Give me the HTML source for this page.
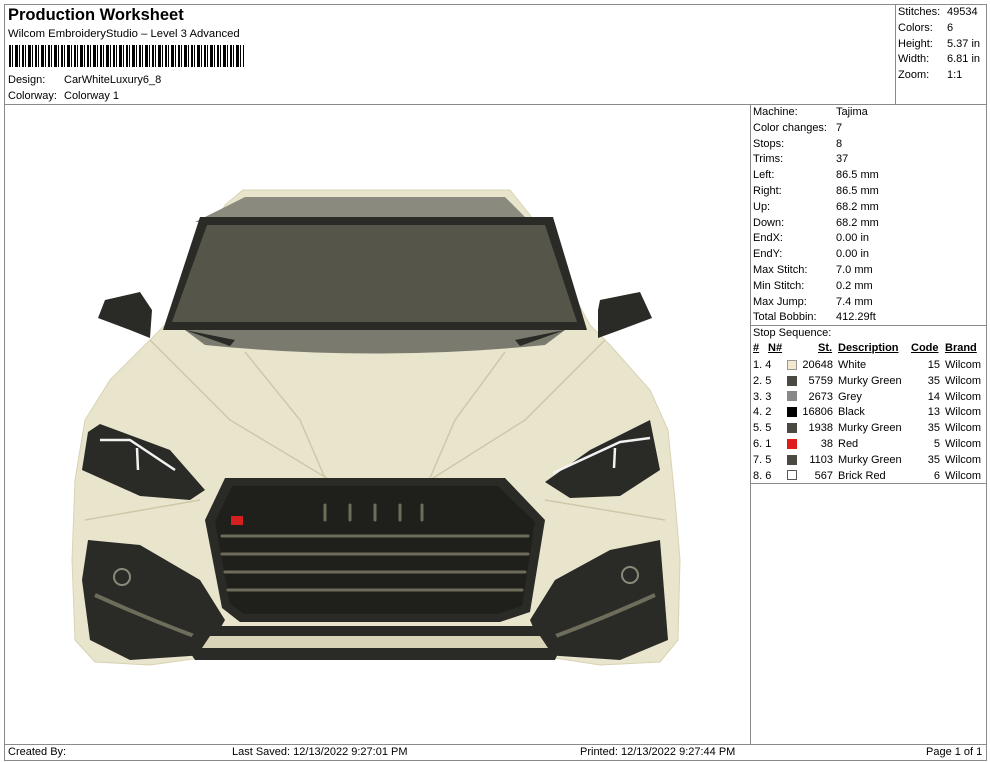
<!DOCTYPE html>
<html><head><meta charset="utf-8"><style>
*{margin:0;padding:0;box-sizing:border-box}
body{width:990px;height:762px;background:#fff;font-family:"Liberation Sans",Arial,sans-serif;color:#000;position:relative;overflow:hidden}
.a{position:absolute;white-space:nowrap}
.l{position:absolute;background:#8a8a8a}
.t{font-size:11px}
</style></head><body>
<div class="l" style="left:4px;top:4px;width:983px;height:1px"></div>
<div class="l" style="left:4px;top:4px;width:1px;height:757px"></div>
<div class="l" style="left:986px;top:4px;width:1px;height:757px"></div>
<div class="l" style="left:4px;top:104px;width:983px;height:1px"></div>
<div class="l" style="left:895px;top:4px;width:1px;height:100px"></div>
<div class="l" style="left:750px;top:104px;width:1px;height:640px"></div>
<div class="l" style="left:750px;top:325px;width:237px;height:1px"></div>
<div class="l" style="left:750px;top:483px;width:237px;height:1px"></div>
<div class="l" style="left:4px;top:744px;width:983px;height:1px"></div>
<div class="l" style="left:4px;top:760px;width:983px;height:1px"></div>

<div class="a" style="left:8px;top:6px;font-size:16.5px;font-weight:bold">Production Worksheet</div>
<div class="a" style="left:8px;top:28px;font-size:11.3px">Wilcom EmbroideryStudio – Level 3 Advanced</div>
<div class="a" style="left:9px;top:45px;width:235px;height:22px;background:repeating-linear-gradient(90deg,#000 0 2px,#fff 2px 3px,#000 3px 4px,#fff 4px 6px,#000 6px 9px,#fff 9px 10px,#000 10px 11px,#fff 11px 13px)"></div>
<div class="a t" style="left:8px;top:74px">Design:</div><div class="a t" style="left:64px;top:74px">CarWhiteLuxury6_8</div>
<div class="a t" style="left:8px;top:90px">Colorway:</div><div class="a t" style="left:64px;top:90px">Colorway 1</div>

<div class="a t" style="left:898px;top:5px;line-height:15.8px">Stitches:<br>Colors:<br>Height:<br>Width:<br>Zoom:</div>
<div class="a t" style="left:947px;top:5px;line-height:15.8px">49534<br>6<br>5.37 in<br>6.81 in<br>1:1</div>

<div class="a t" style="left:753px;top:105px;line-height:15.8px">Machine:<br>Color changes:<br>Stops:<br>Trims:<br>Left:<br>Right:<br>Up:<br>Down:<br>EndX:<br>EndY:<br>Max Stitch:<br>Min Stitch:<br>Max Jump:<br>Total Bobbin:<br>Stop Sequence:</div>
<div class="a t" style="left:836px;top:105px;line-height:15.8px">Tajima<br>7<br>8<br>37<br>86.5 mm<br>86.5 mm<br>68.2 mm<br>68.2 mm<br>0.00 in<br>0.00 in<br>7.0 mm<br>0.2 mm<br>7.4 mm<br>412.29ft</div>

<div class="a t" style="left:753px;top:342px;font-weight:bold;text-decoration:underline">#</div>
<div class="a t" style="left:768px;top:342px;font-weight:bold;text-decoration:underline">N#</div>
<div class="a t" style="left:818px;top:342px;font-weight:bold;text-decoration:underline">St.</div>
<div class="a t" style="left:838px;top:342px;font-weight:bold;text-decoration:underline">Description</div>
<div class="a t" style="left:911px;top:342px;font-weight:bold;text-decoration:underline">Code</div>
<div class="a t" style="left:945px;top:342px;font-weight:bold;text-decoration:underline">Brand</div>
<div class="a t" style="left:753px;top:358px;line-height:15.8px">1. 4<br>2. 5<br>3. 3<br>4. 2<br>5. 5<br>6. 1<br>7. 5<br>8. 6</div>
<div class="a t" style="left:796px;top:358px;line-height:15.8px;text-align:right;width:37px">20648<br>5759<br>2673<br>16806<br>1938<br>38<br>1103<br>567</div>
<div class="a t" style="left:838px;top:358px;line-height:15.8px">White<br>Murky Green<br>Grey<br>Black<br>Murky Green<br>Red<br>Murky Green<br>Brick Red</div>
<div class="a t" style="left:920px;top:358px;line-height:15.8px;text-align:right;width:20px">15<br>35<br>14<br>13<br>35<br>5<br>35<br>6</div>
<div class="a t" style="left:945px;top:358px;line-height:15.8px">Wilcom<br>Wilcom<br>Wilcom<br>Wilcom<br>Wilcom<br>Wilcom<br>Wilcom<br>Wilcom</div>
<div class="a" style="left:787px;top:360px;width:10px;height:10px;background:#f3e8cc;border:1px solid #999"></div>
<div class="a" style="left:787px;top:376px;width:10px;height:10px;background:#4a4a42"></div>
<div class="a" style="left:787px;top:391px;width:10px;height:10px;background:#888"></div>
<div class="a" style="left:787px;top:407px;width:10px;height:10px;background:#000"></div>
<div class="a" style="left:787px;top:423px;width:10px;height:10px;background:#4a4a42"></div>
<div class="a" style="left:787px;top:439px;width:10px;height:10px;background:#e01b1b"></div>
<div class="a" style="left:787px;top:455px;width:10px;height:10px;background:#4a4a42"></div>
<div class="a" style="left:787px;top:470px;width:10px;height:10px;background:#fff;border:1px solid #555"></div>

<div class="a t" style="left:8px;top:746px">Created By:</div>
<div class="a t" style="left:232px;top:746px">Last Saved: 12/13/2022 9:27:01 PM</div>
<div class="a t" style="left:580px;top:746px">Printed: 12/13/2022 9:27:44 PM</div>
<div class="a t" style="left:926px;top:746px">Page 1 of 1</div>

<svg class="a" style="left:0;top:0" width="750" height="744" viewBox="0 0 750 744">
<g stroke-linejoin="round">
<polygon points="243,190 510,190 530,215 590,325 610,345 650,390 668,430 675,500 680,560 678,640 660,662 600,665 555,658 200,658 150,665 95,662 75,640 72,560 75,480 85,420 110,380 150,340 170,320 225,205" fill="#e9e5cd" stroke="#d8d2b4"/>
<g fill="none" stroke="#cfc8a8" stroke-width="1.5">
<path d="M245,352 L300,420 L325,478"/><path d="M505,352 L455,420 L430,478"/>
<path d="M150,340 L230,420 L330,480"/><path d="M605,340 L525,420 L430,480"/>
<path d="M85,520 L200,500"/><path d="M665,520 L545,500"/>
</g>
<polygon points="245,197 505,197 530,222 195,222" fill="#8a8a7e"/>
<polygon points="200,217 553,217 587,330 163,330" fill="#2a2a26"/>
<polygon points="207,225 545,225 577,322 172,322" fill="#55554a"/>
<path d="M185,330 L565,330 L545,345 Q375,362 205,345 Z" fill="#7a7a6e"/>
<path d="M185,330 L230,346 L235,340 Z M565,330 L520,346 L515,340 Z" fill="#2a2a26"/>
<polygon points="105,300 140,292 152,310 150,338 130,330 98,318" fill="#2a2a26"/>
<polygon points="600,300 640,292 652,318 620,330 598,338 598,310" fill="#2a2a26"/>
<polygon points="100,424 170,450 205,490 190,500 140,496 82,470 88,432" fill="#2a2a26"/>
<polygon points="650,420 660,470 620,496 570,498 545,482 590,450" fill="#2a2a26"/>
<path d="M100,440 L130,440 L175,470 M137,448 L138,470" stroke="#f2f2f2" stroke-width="2.5" fill="none"/>
<path d="M650,438 L620,442 L553,473 M615,448 L614,468" stroke="#f2f2f2" stroke-width="2.5" fill="none"/>
<polygon points="225,478 505,478 545,520 530,612 500,622 240,622 222,608 205,520" fill="#2a2a26"/>
<polygon points="232,486 498,486 535,522 522,606 497,614 244,614 230,604 215,522" fill="#1f1f1c"/>
<g stroke="#6e6c5a" stroke-width="3" stroke-linecap="round">
<line x1="222" y1="536" x2="528" y2="536"/><line x1="222" y1="554" x2="528" y2="554"/>
<line x1="225" y1="572" x2="525" y2="572"/><line x1="228" y1="590" x2="522" y2="590"/>
<line x1="325" y1="505" x2="325" y2="520"/><line x1="350" y1="505" x2="350" y2="520"/><line x1="375" y1="505" x2="375" y2="520"/><line x1="400" y1="505" x2="400" y2="520"/><line x1="422" y1="505" x2="422" y2="520"/>
</g>
<rect x="231" y="516" width="12" height="9" fill="#d42020"/>
<polygon points="88,540 140,545 200,580 225,620 205,655 130,660 90,640 82,580" fill="#2a2a26"/>
<polygon points="660,540 668,640 620,660 545,655 530,620 555,580 610,550" fill="#2a2a26"/>
<path d="M95,595 Q150,620 205,640" stroke="#6e6c5a" stroke-width="4" fill="none"/>
<path d="M655,595 Q600,620 545,640" stroke="#6e6c5a" stroke-width="4" fill="none"/>
<circle cx="122" cy="577" r="8" fill="none" stroke="#8a8a7a" stroke-width="2"/>
<circle cx="630" cy="575" r="8" fill="none" stroke="#8a8a7a" stroke-width="2"/>
<polygon points="200,626 550,626 562,645 555,660 195,660 185,645" fill="#2a2a26"/>
<polygon points="210,636 540,636 548,648 202,648" fill="#d9d4b8"/>
</g>
</svg>
</body></html>
